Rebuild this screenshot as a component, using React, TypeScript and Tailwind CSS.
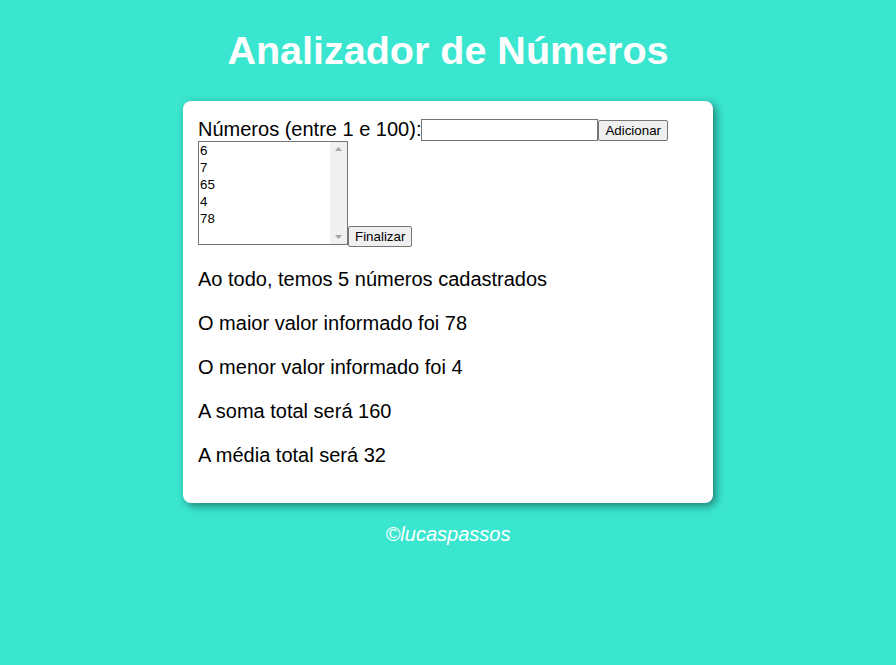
import { useState } from 'react'

const valores = [6, 7, 65, 4, 78]

function ListaFake() {
  return (
    <div className="flex h-[104px] w-[150px] border border-[#767676] bg-white">
      <div className="flex-1 pl-[1px] text-[13.33px] leading-[17px] text-black">
        {valores.map((v) => (
          <div key={v}>{v}</div>
        ))}
      </div>
      <div className="flex w-[17px] flex-col items-center justify-between bg-[#f0f0f0] py-[5px]">
        <svg width="7" height="4" viewBox="0 0 7 4">
          <path d="M0 4 L3.5 0 L7 4 Z" fill="#a3a3a3" />
        </svg>
        <svg width="7" height="4" viewBox="0 0 7 4">
          <path d="M0 0 L3.5 4 L7 0 Z" fill="#a3a3a3" />
        </svg>
      </div>
    </div>
  )
}

export default function App() {
  const [num, setNum] = useState('')

  const soma = valores.reduce((a, b) => a + b, 0)
  const media = soma / valores.length

  return (
    <div className="min-h-screen bg-[#3ae6cf] pt-[27px] font-['Liberation_Sans',Arial,sans-serif]">
      <h1 className="text-center text-[39.5px] font-bold leading-[46px] text-white">
        Analizador de Números
      </h1>

      <main className="mx-auto mt-[28px] w-[530px] rounded-[8px] bg-white px-[15px] pt-[17px] pb-[17px] shadow-[3px_3px_8px_rgba(0,0,0,0.45)]">
        <div className="text-[20px] leading-[23px] text-black">
          <span>Números (entre 1 e 100):</span>
          <input
            type="number"
            value={num}
            onChange={(e) => setNum(e.target.value)}
            className="h-[22px] w-[177px] border border-[#767676] px-[2px] align-bottom text-[13.33px] [appearance:textfield]"
          />
          <button className="h-[21px] rounded-[2px] border border-[#767676] bg-[#efefef] px-[6px] align-bottom text-[13.33px] leading-[15px]">
            Adicionar
          </button>
        </div>

        <div className="flex items-end">
          <ListaFake />
          <button className="mb-[-2px] h-[21px] rounded-[2px] border border-[#767676] bg-[#efefef] px-[6px] text-[13.33px] leading-[15px]">
            Finalizar
          </button>
        </div>

        <div className="mt-[23px] flex flex-col gap-[21px] text-[20px] leading-[23px] text-black">
          <p>Ao todo, temos {valores.length} números cadastrados</p>
          <p>O maior valor informado foi {Math.max(...valores)}</p>
          <p>O menor valor informado foi {Math.min(...valores)}</p>
          <p>A soma total será {soma}</p>
          <p>A média total será {media}</p>
        </div>
        <div className="h-[19px]" />
      </main>

      <p className="mt-[20px] text-center text-[20px] leading-[23px] italic text-white">©lucaspassos</p>
    </div>
  )
}
